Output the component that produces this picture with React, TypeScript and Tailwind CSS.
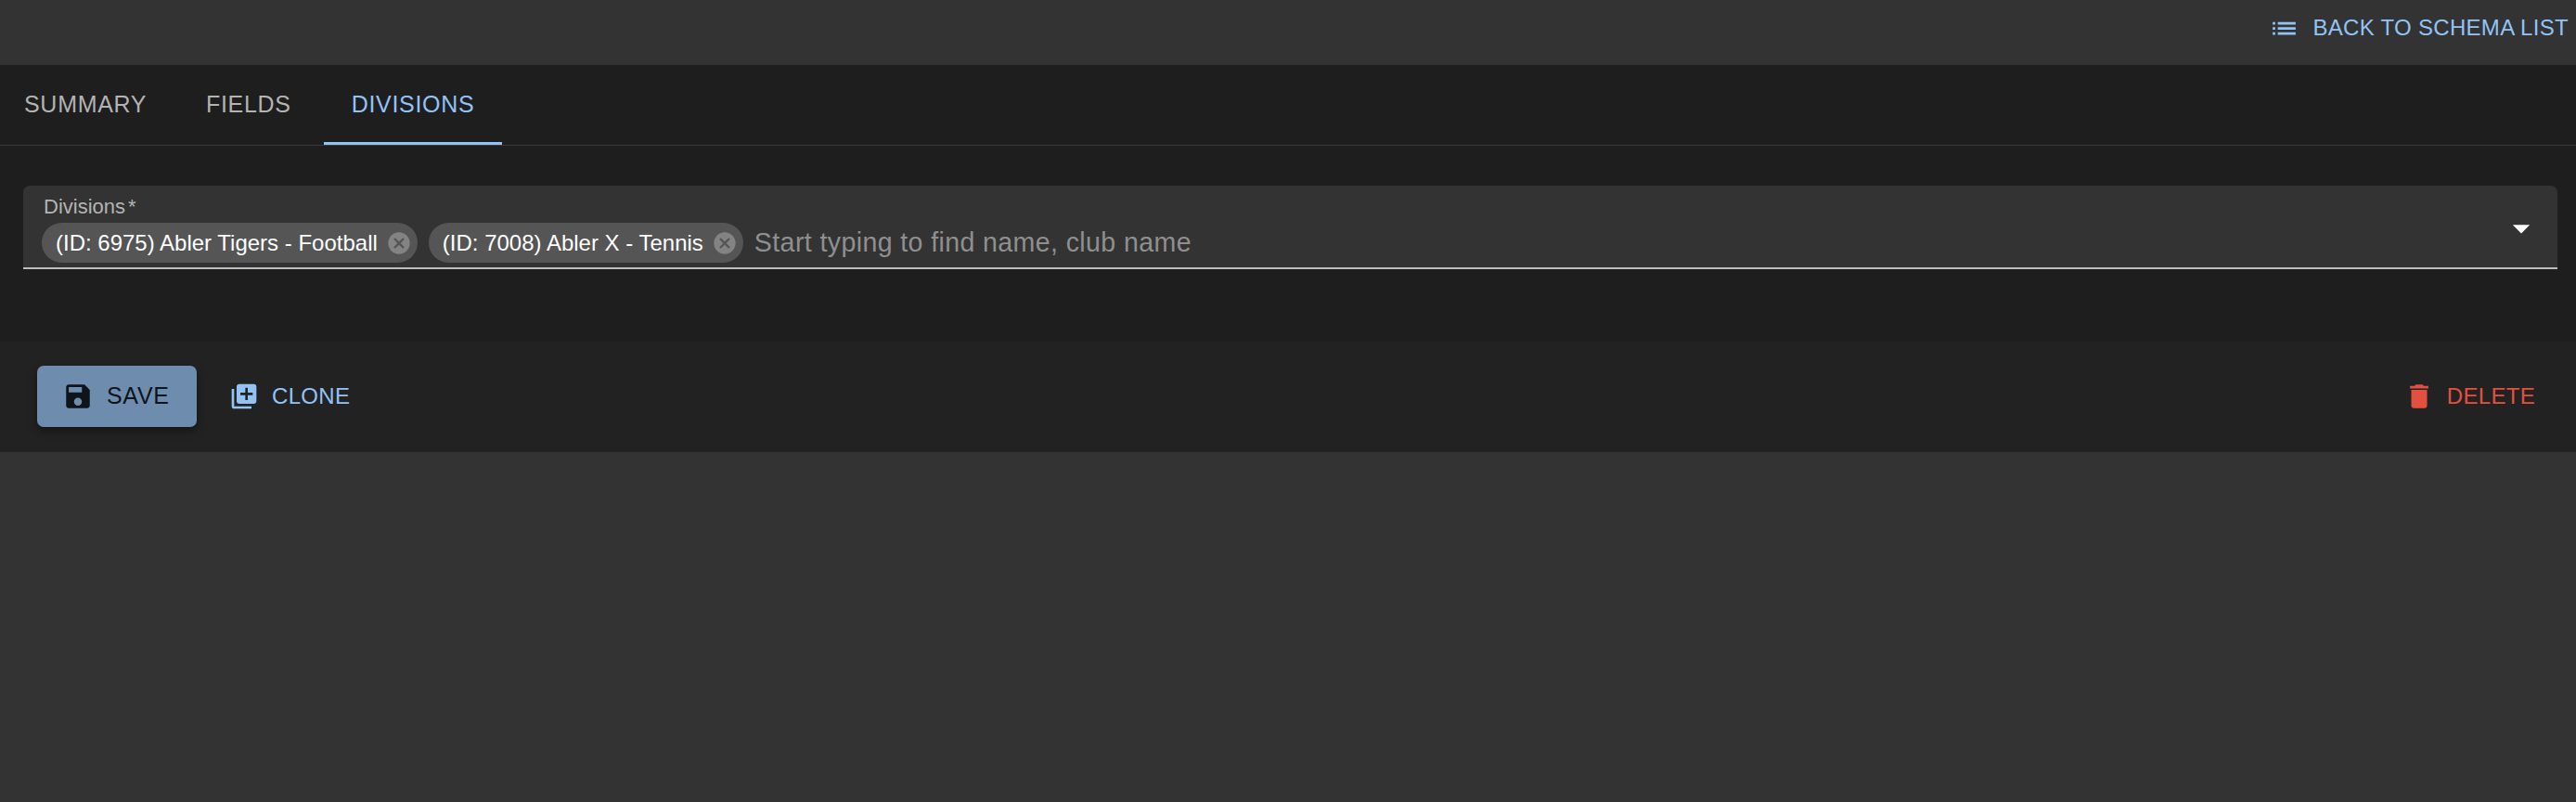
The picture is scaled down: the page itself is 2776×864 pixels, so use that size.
import React from 'react';

const paths = {
  list: 'M3 13h2v-2H3v2zm0 4h2v-2H3v2zm0-8h2V7H3v2zm4 4h14v-2H7v2zm0 4h14v-2H7v2zM7 7v2h14V7H7z',
  save: 'M17 3H5c-1.11 0-2 .9-2 2v14c0 1.1.89 2 2 2h14c1.1 0 2-.9 2-2V7l-4-4zm-5 16c-1.66 0-3-1.34-3-3s1.34-3 3-3 3 1.34 3 3-1.34 3-3 3zm3-10H5V5h10v4z',
  clone: 'M4 6H2v14c0 1.1.9 2 2 2h14v-2H4V6zm16-4H8c-1.1 0-2 .9-2 2v12c0 1.1.9 2 2 2h12c1.1 0 2-.9 2-2V4c0-1.1-.9-2-2-2zm-1 9h-4v4h-2v-4H9V9h4V5h2v4h4v2z',
  trash: 'M6 19c0 1.1.9 2 2 2h8c1.1 0 2-.9 2-2V7H6v12zM19 4h-3.5l-1-1h-5l-1 1H5v2h14V4z',
  cancel: 'M12 2C6.47 2 2 6.47 2 12s4.47 10 10 10 10-4.47 10-10S17.53 2 12 2zm5 13.59L15.59 17 12 13.41 8.41 17 7 15.59 10.59 12 7 8.41 8.41 7 12 10.59 15.59 7 17 8.41 13.41 12 17 15.59z',
  arrow: 'M7 10l5 5 5-5z',
};

const Icon = ({ d, className }: { d: string; className: string }) => (
  <svg viewBox="0 0 24 24" fill="currentColor" className={className}>
    <path d={d} />
  </svg>
);

const Chip = ({ label }: { label: string }) => (
  <div className="flex h-[43px] items-center rounded-[22px] bg-[#555555] pl-[15px] pr-[6px] text-[24px] text-white">
    <span>{label}</span>
    <Icon d={paths.cancel} className="ml-[9px] h-[28px] w-[28px] text-[#838383]" />
  </div>
);

export default function App() {
  return (
    <div className="min-h-[864px] bg-[#333333] font-['Liberation_Sans',sans-serif]">
      {/* top bar */}
      <div className="flex h-[70px] items-center justify-end pb-[10px] pr-[8px]">
        <button className="flex items-center text-[24px] tracking-[0.3px] text-[#92c3f5]">
          <Icon d={paths.list} className="h-[33px] w-[33px]" />
          <span className="ml-[14px]">BACK TO SCHEMA LIST</span>
        </button>
      </div>

      {/* tabs */}
      <div className="flex h-[87px] border-b border-[#3a3a3a] bg-[#1e1e1e] text-[25px] tracking-[0.7px]">
        <div className="flex h-[86px] w-[187px] items-center pl-[26px] text-[#b3b3b3]">SUMMARY</div>
        <div className="flex h-[86px] w-[162px] items-center pl-[35px] text-[#b3b3b3]">FIELDS</div>
        <div className="flex h-[86px] w-[192px] items-center justify-center border-b-[3px] border-[#92c3f5] pt-[3px] text-[#92c3f5]">
          DIVISIONS
        </div>
      </div>

      {/* divisions field */}
      <div className="h-[211px] bg-[#1e1e1e] pl-[25px] pr-[20px] pt-[43px]">
        <div className="flex h-[90px] items-start justify-between rounded-t-[7px] border-b-2 border-[#bdbdbd] bg-[#333333] pl-[20px] pr-[17px]">
          <div>
            <div className="ml-[2px] mt-[10px] h-[26px] text-[22px] leading-[26px] text-[#b3b3b3]">
              Divisions<span className="ml-[3px]">*</span>
            </div>
            <div className="mt-[4px] flex items-center gap-[12px]">
              <Chip label="(ID: 6975) Abler Tigers - Football" />
              <Chip label="(ID: 7008) Abler X - Tennis" />
              <span className="text-[28.6px] tracking-[0.37px] text-[#8f8f8f]">Start typing to find name, club name</span>
            </div>
          </div>
          <Icon d={paths.arrow} className="mt-[24px] h-[44px] w-[44px] text-white" />
        </div>
      </div>

      {/* actions */}
      <div className="flex h-[119px] items-center justify-between bg-[#222222] pb-[2px] pl-[40px] pr-[44px]">
        <div className="flex items-center">
          <button className="flex h-[66px] w-[172px] items-center rounded-[7px] bg-[#6e8dae] pl-[27px] text-[25px] tracking-[0.7px] text-[#0f141a] shadow-[0_4px_10px_rgba(0,0,0,0.4)]">
            <Icon d={paths.save} className="h-[34px] w-[34px]" />
            <span className="ml-[14px]">SAVE</span>
          </button>
          <button className="ml-[35px] flex items-center text-[24px] tracking-[0.3px] text-[#92c3f5]">
            <Icon d={paths.clone} className="h-[32px] w-[32px]" />
            <span className="ml-[14px]">CLONE</span>
          </button>
        </div>
        <button className="flex items-center text-[24px] tracking-[0.3px] text-[#e2513f]">
          <Icon d={paths.trash} className="h-[34px] w-[34px]" />
          <span className="ml-[13px]">DELETE</span>
        </button>
      </div>
    </div>
  );
}
